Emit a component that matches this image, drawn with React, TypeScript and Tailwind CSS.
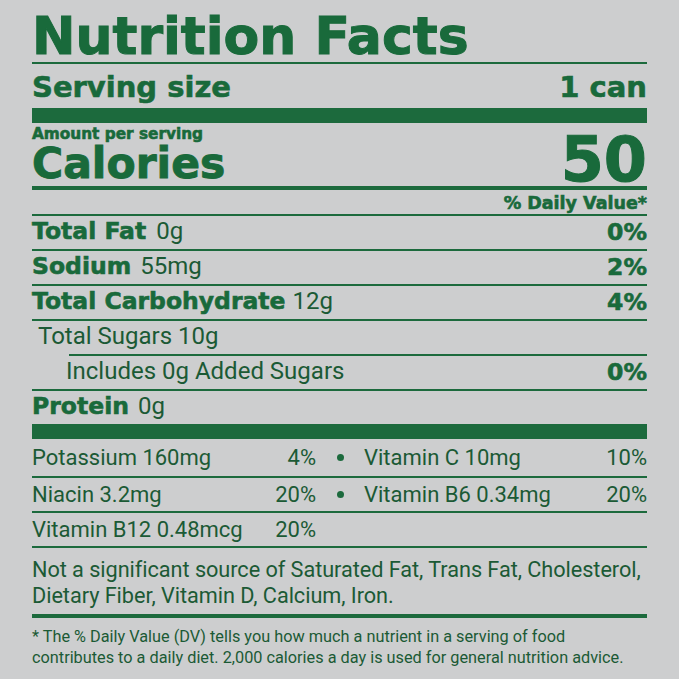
import React from "react";

const B =
  "font-['DejaVu_Sans',sans-serif] font-bold text-[#196a3b] [-webkit-text-stroke:0.6px_currentColor]";
const R = "font-['Roboto',sans-serif] font-normal text-[#1b5a35]";

function Rule({ h = "h-[2px]", indent = "" }: { h?: string; indent?: string }) {
  return <div className={`${h} ${indent} bg-[#1c6a3d]`} />;
}

function Row({
  children,
  pct,
  h = "h-[33px]",
}: {
  children: React.ReactNode;
  pct?: string;
  h?: string;
}) {
  return (
    <div className={`${h} flex items-center justify-between`}>
      <div className="leading-[33px] whitespace-nowrap">{children}</div>
      {pct && <div className={`${B} text-[23.5px] leading-[33px]`}>{pct}</div>}
    </div>
  );
}

function VitRow({
  a,
  ap,
  b,
  bp,
  h = "h-[33px]",
}: {
  a: string;
  ap: string;
  b?: string;
  bp?: string;
  h?: string;
}) {
  return (
    <div className={`${h} grid grid-cols-[284px_48px_1fr] items-center ${R} text-[22px] leading-[33px]`}>
      <div className="flex justify-between">
        <span>{a}</span>
        <span>{ap}</span>
      </div>
      <div className="flex justify-center">
        {b && <span className="w-[7px] h-[7px] rounded-full bg-[#1c6a3d]" />}
      </div>
      <div className="flex justify-between">
        <span>{b}</span>
        <span>{bp}</span>
      </div>
    </div>
  );
}

export default function App() {
  return (
    <div className="w-[679px] h-[679px] bg-[#cdcecf] px-[32px] overflow-hidden">
      <div className="h-[62px] pt-[12px]">
        <h1 className="font-['DejaVu_Sans',sans-serif] font-bold text-[#196a3b] [-webkit-text-stroke:1px_currentColor] text-[52px] leading-[49px] whitespace-nowrap">
          Nutrition Facts
        </h1>
      </div>
      <Rule />
      <div className="h-[44px] flex items-end justify-between pb-[6px]">
        <span className={`${B} text-[29px] leading-[29px]`}>Serving size</span>
        <span className={`${B} text-[29px] leading-[29px]`}>1 can</span>
      </div>
      <Rule h="h-[15px]" />
      <div className="h-[63px] flex items-end justify-between pb-[4px]">
        <div className="flex flex-col">
          <span className={`${B} text-[15.3px] leading-[16px] mb-[4px] [-webkit-text-stroke:0.4px_currentColor]`}>
            Amount per serving
          </span>
          <span className={`${B} text-[42.5px] leading-[36px] [-webkit-text-stroke:0.9px_currentColor]`}>Calories</span>
        </div>
        <span className={`${B} text-[62px] leading-[44px] [-webkit-text-stroke:1px_currentColor]`}>50</span>
      </div>
      <Rule h="h-[4px]" />
      <div className="h-[24px] flex items-end justify-end pb-[2px]">
        <span className={`${B} text-[17.5px] leading-[18px] [-webkit-text-stroke:0.4px_currentColor]`}>% Daily Value*</span>
      </div>
      <Rule />
      <Row pct="0%">
        <span className={`${B} text-[23.5px]`}>Total Fat</span>
        <span className={`${R} text-[24px] ml-[10px]`}>0g</span>
      </Row>
      <Rule />
      <Row pct="2%">
        <span className={`${B} text-[23.5px]`}>Sodium</span>
        <span className={`${R} text-[24px] ml-[9px]`}>55mg</span>
      </Row>
      <Rule />
      <Row pct="4%">
        <span className={`${B} text-[23.5px]`}>Total Carbohydrate</span>
        <span className={`${R} text-[24px] ml-[7px]`}>12g</span>
      </Row>
      <Rule />
      <Row>
        <span className={`${R} text-[24px] pl-[6px]`}>Total Sugars 10g</span>
      </Row>
      <Rule indent="ml-[37px]" />
      <Row pct="0%">
        <span className={`${R} text-[24px] pl-[34px]`}>Includes 0g Added Sugars</span>
      </Row>
      <Rule />
      <Row>
        <span className={`${B} text-[23.5px]`}>Protein</span>
        <span className={`${R} text-[24px] ml-[9px]`}>0g</span>
      </Row>
      <Rule h="h-[15px]" />
      <VitRow h="h-[37px]" a="Potassium 160mg" ap="4%" b="Vitamin C 10mg" bp="10%" />
      <Rule />
      <VitRow a="Niacin 3.2mg" ap="20%" b="Vitamin B6 0.34mg" bp="20%" />
      <Rule />
      <VitRow a="Vitamin B12 0.48mcg" ap="20%" />
      <Rule />
      <div className={`h-[66px] pt-[9px] ${R} text-[21.7px] leading-[26px] tracking-[-0.05px] whitespace-nowrap`}>
        Not a significant source of Saturated Fat, Trans Fat, Cholesterol,
        <br />
        Dietary Fiber, Vitamin D, Calcium, Iron.
      </div>
      <Rule h="h-[4px]" />
      <div className={`pt-[8px] ${R} text-[16.3px] leading-[21px] whitespace-nowrap`}>
        * The % Daily Value (DV) tells you how much a nutrient in a serving of food
        <br />
        contributes to a daily diet. 2,000 calories a day is used for general nutrition advice.
      </div>
    </div>
  );
}
